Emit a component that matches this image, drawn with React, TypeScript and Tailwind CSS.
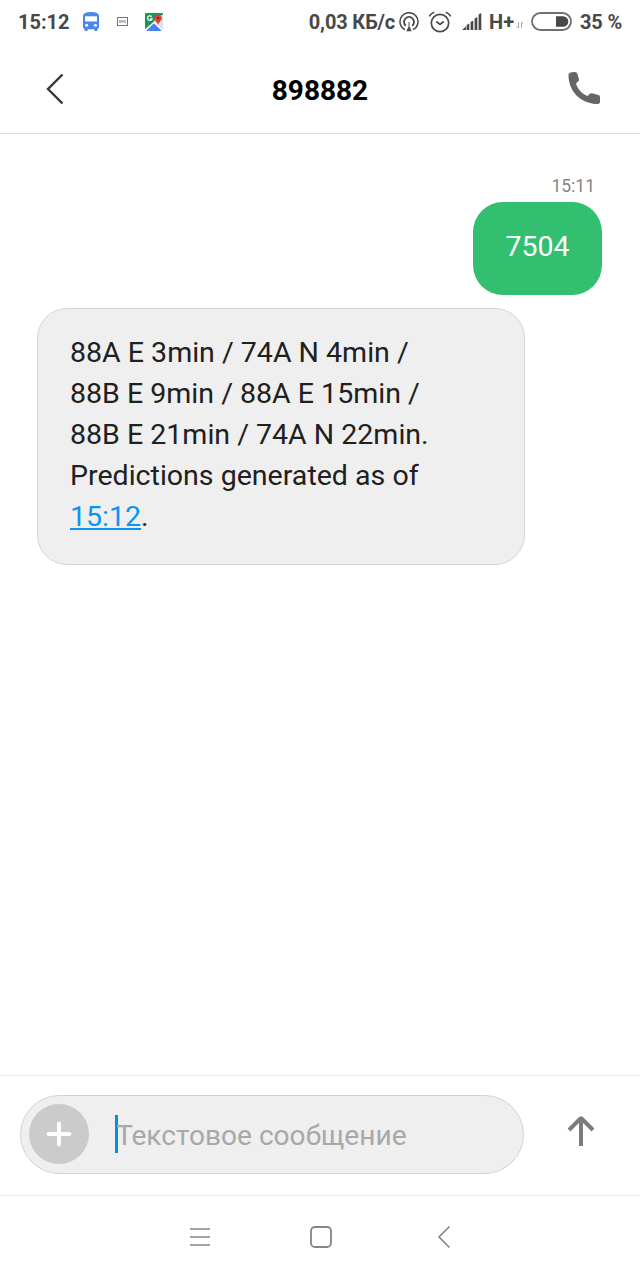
import React from "react";

function StatusBar() {
  return (
    <div className="flex h-[45px] items-center pr-[18px] pb-[2px] pl-[18px] text-[20px] leading-none font-bold whitespace-nowrap text-[#484848]">
      <span className="w-[64px]">15:12</span>
      <svg width="18" height="20" viewBox="0 0 18 20" className="shrink-0">
        <path fill="#4688ed" d="M1 4Q1 0 9 0Q17 0 17 4V15Q17 16.500 15.500 17V18Q15.500 19 14.500 19H13.300Q12.300 19 12.300 18V17.300H5.700V18Q5.700 19 4.700 19H3.500Q2.500 19 2.500 18V17Q1 16.500 1 15Z" />
        <path fill="#fff" d="M3 4.300H15V9.500H3Z" />
        <circle cx="4.600" cy="13.300" r="1.500" fill="#fff" />
        <circle cx="13.400" cy="13.300" r="1.500" fill="#fff" />
      </svg>
      <div className="ml-[17px] flex h-[9px] w-[11px] shrink-0 items-center justify-center border border-[#777] text-[4px] leading-none text-[#888]">
        EFG
      </div>
      <svg width="18" height="18" viewBox="0 0 18 18" className="ml-[17px] shrink-0">
        <path fill="#159957" d="M0 1Q0 0 1 0H17Q18 0 18 1V9L9 9L0 17Z" />
        <path fill="#dce3e8" d="M10 8L16 2H18V17L9 9Z" />
        <path fill="#4683ed" d="M1 18L9 10L17 18Z" />
        <path stroke="#fff" strokeWidth="1.200" fill="none" d="M0 17L9 9.300L18 18" />
        <path stroke="#f7cf49" strokeWidth="1.600" d="M9 9L12 5" />
        <path fill="#d94435" d="M9.400 5.300A3.700 3.700 0 0 1 16.800 5.300C16.800 8 13.800 8.500 13.100 12.500C12.400 8.500 9.400 8 9.400 5.300Z" />
        <circle cx="13.100" cy="5.200" r="1.200" fill="#8e2925" />
        <path stroke="#fff" strokeWidth="1.300" fill="none" d="M6.700 3.700A2.300 2.300 0 1 0 7 6H5" />
      </svg>
      <span className="ml-auto tracking-[-0.150px]">0,03 КБ/с</span>
      <svg width="20" height="20" viewBox="0 0 20 20" fill="none" stroke="#484848" strokeWidth="1.500" className="ml-[4px] shrink-0">
        <path d="M6 17.700A9 9 0 1 1 14 17.700" />
        <path d="M6.800 13.800A5 5 0 1 1 13.200 13.800" strokeWidth="1.800" />
        <path d="M10 13.500L12.700 19.300H7.300Z" fill="#484848" stroke="none" />
        <path d="M10 10V14" strokeWidth="1" />
      </svg>
      <svg width="24" height="22" viewBox="0 0 24 22" fill="none" stroke="#484848" strokeWidth="1.700" className="ml-[9px] shrink-0">
        <circle cx="12" cy="12" r="8.700" />
        <path d="M1.300 5.300Q3 2.300 6.300 1.300M22.700 5.300Q21 2.300 17.700 1.300M8.300 10.500L12 13.500L15.700 10.500" />
      </svg>
      <svg width="20" height="18" viewBox="0 0 20 18" fill="#484848" className="ml-[10px] shrink-0">
        <path d="M0 17L4 13.500V17ZM4.600 12L7.300 10.500V17H4.600ZM8.600 9L11.300 7.500V17H8.600ZM12.600 5.500L15.300 4V17H12.600ZM16.600 1.500L19.300 0V17H16.600Z" />
      </svg>
      <span className="ml-[7px]">H+</span>
      <svg width="8" height="8" viewBox="0 0 8 8" fill="none" stroke="#aaa" className="mt-[7px] ml-[2px] shrink-0">
        <path d="M2.500 1V7L.8 5.300M5.500 7V1L7.200 2.700" />
      </svg>
      <svg width="41" height="20" viewBox="0 0 41 20" className="ml-[7px] shrink-0">
        <rect x="1" y="1" width="39" height="17" rx="8.500" fill="none" stroke="#707070" strokeWidth="1.800" />
        <path fill="#484848" d="M25 4.200H32A5.300 5.300 0 0 1 32 14.800H25Z" />
      </svg>
      <span className="ml-[8px] tracking-[-0.2px]">35 %</span>
    </div>
  );
}

export default function App() {
  return (
    <div className="flex h-[1280px] w-[640px] flex-col overflow-hidden bg-white font-['Roboto','Noto_Sans',sans-serif]">
      <StatusBar />
      <header className="flex h-[89px] items-center border-b border-[#dcdcdc] pr-[40px] pl-[45px]">
        <svg width="20" height="32" viewBox="0 0 20 32" fill="none" stroke="#363636" strokeWidth="2.400">
          <path d="M17.500 1.500L3 16L17.500 30.500" />
        </svg>
        <h1 className="flex-1 pt-[3px] pl-[7px] text-center text-[28px] leading-none font-bold text-black">898882</h1>
        <svg width="32" height="32" viewBox="0 0 32 32" className="mb-[2px]">
          <path
            fill="#666"
            d="M1.500 1Q3 0 7 0Q8.500 0 9.300 1.500L11 7.500Q11.300 9 9.500 10L8 11.500C9.500 17 14 22 19.500 24L21.500 22Q23 21 25 21.500L30.500 23Q32 23.400 32 25V30.500Q31.500 32 28 32C12 31 0.500 19 0.500 3Q0.500 1.500 1.500 1Z"
          />
        </svg>
      </header>
      <main className="flex flex-1 flex-col items-start pt-[42px] pl-[37px]">
        <time className="mr-[45px] self-end text-[17.500px] leading-[21px] text-[#858585]">15:11</time>
        <div className="mt-[5px] mr-[38px] flex h-[93px] w-[129px] items-center justify-center self-end rounded-[30px] bg-[#33bf70] pb-[3px] text-[28.500px] text-white">
          7504
        </div>
        <p className="mt-[13px] h-[257px] w-[488px] rounded-[30px] border border-[#d6d6d6] bg-[#efefef] pt-[23px] pl-[32px] text-[28.550px] leading-[41px] whitespace-nowrap text-[#202020]">
          88A E 3min / 74A N 4min /<br />
          88B E 9min / 88A E 15min /<br />
          88B E 21min / 74A N 22min.<br />
          Predictions generated as of<br />
          <span className="text-[#0b95f3] underline decoration-2 underline-offset-[2px]">15:12</span>.
        </p>
      </main>
      <footer className="flex h-[120px] items-center border-t border-[#ececec] pl-[20px]">
        <div className="mb-[3px] flex h-[79px] w-[504px] items-center rounded-full border border-[#d2d2d2] bg-[#efefef] pl-[8px]">
          <div className="flex size-[60px] items-center justify-center rounded-full bg-[#cbcbcb]">
            <svg width="26" height="26" viewBox="0 0 26 26" stroke="#fff" strokeWidth="3.800" strokeLinecap="round">
              <path d="M13 2.500V23.500M2.500 13H23.500" />
            </svg>
          </div>
          <div className="ml-[26px] h-[38px] w-[3px] bg-[#078fdc]" />
          <span className="-ml-[2px] pt-[4px] text-[28.100px] leading-none whitespace-nowrap text-[#a8a8a8]">Текстовое сообщение</span>
        </div>
        <svg width="28" height="32" viewBox="0 0 28 32" fill="none" stroke="#7c7c7c" strokeWidth="4" strokeLinejoin="bevel" className="mb-[9px] ml-[43px]">
          <path d="M14 31V3M2 15L14 3L26 15" />
        </svg>
      </footer>
      <nav className="flex h-[85px] items-center border-t border-[#ececec] pb-[2px] pl-[190px]">
        <svg width="20" height="20" viewBox="0 0 20 20" stroke="#858585" strokeWidth="1.600">
          <path d="M0 2H20M0 10H20M0 18H20" />
        </svg>
        <svg width="24" height="24" viewBox="0 0 24 24" fill="none" stroke="#858585" strokeWidth="1.800" className="ml-[99px]">
          <rect x="2" y="2" width="20" height="20" rx="4" />
        </svg>
        <svg width="14" height="24" viewBox="0 0 14 24" fill="none" stroke="#858585" strokeWidth="1.600" className="ml-[104px]">
          <path d="M12.500 1.500L2 12L12.500 22.500" />
        </svg>
      </nav>
    </div>
  );
}
